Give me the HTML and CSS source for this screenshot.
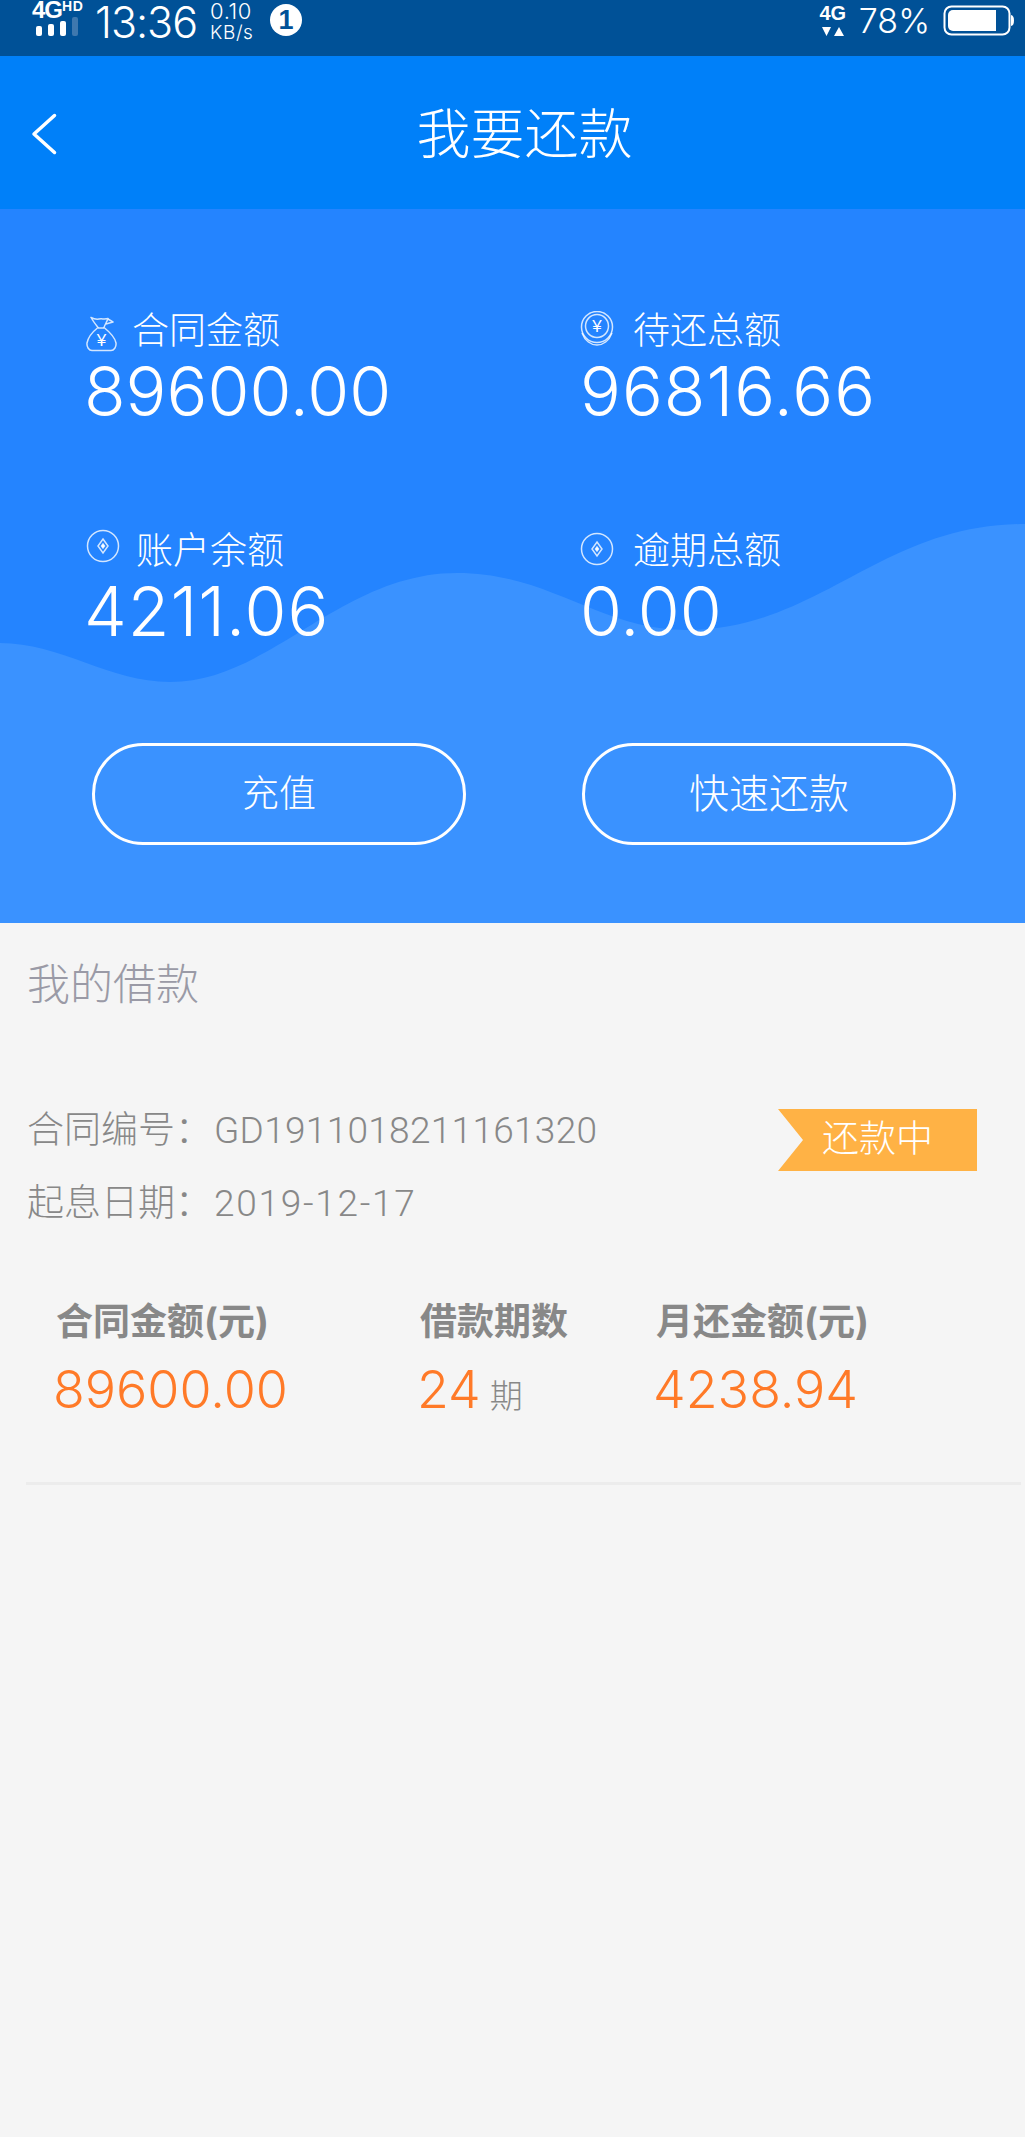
FILE: index.html
```html
<!DOCTYPE html>
<html lang="zh-CN">
<head>
    <meta charset="UTF-8">
    <meta name="viewport" content="width=device-width, initial-scale=1.0">
    <title>我要还款</title>
    <link rel="stylesheet" href="styles.css">
</head>
<body>
    <div class="status-bar">
        <div class="signal">
            <div class="signal-type"><span class="net">4G</span><span class="hd">HD</span></div>
            <div class="bars"><i></i><i></i><i></i><i class="off"></i></div>
        </div>
        <span class="clock">13:36</span>
        <div class="speed"><span>0.10</span><span class="unit">KB/s</span></div>
        <span class="notice">1</span>
        <div class="status-right">
            <div class="data">
                <span>4G</span>
                <svg width="22" height="10" viewBox="0 0 22 10"><path d="M0 1h9L4.500 10zM12 10h10L17 1z" fill="#fff"/></svg>
            </div>
            <span class="percent">78%</span>
            <svg class="battery" width="71" height="32" viewBox="0 0 71 32">
                <rect x="1.500" y="1.500" width="65" height="28" rx="7" fill="none" stroke="#fff" stroke-width="2"/>
                <path d="M5 10a5 5 0 0 1 5-5h43v21H10a5 5 0 0 1-5-5z" fill="#fff"/>
                <path d="M68 10c2 .5 3 2 3 5.500s-1 5-3 5.500z" fill="#fff"/>
            </svg>
        </div>
    </div>

    <div class="nav">
        <svg class="back" width="26" height="42" viewBox="0 0 26 42"><path d="M23.500 2.500L3 21l20.500 18.500" fill="none" stroke="#fff" stroke-width="3.500" stroke-linecap="round" stroke-linejoin="round"/></svg>
        <h1>我要还款</h1>
    </div>

    <div class="hero">
        <svg class="wave" width="1025" height="714" viewBox="0 0 1025 714"><path d="M0 434C60 434 110 473 170 473C270 473 340 364 457 364C550 364 600 421 686 421C820 421 880 315 1025 315V714H0Z" fill="#3a92ff"/></svg>
        <div class="stats">
            <div class="stat">
                <div class="stat-head">
                    <svg class="icon bag" width="31" height="36" viewBox="0 0 31 36" fill="none" stroke="#fff" stroke-opacity=".8" stroke-width="1.500" stroke-linejoin="round">
                        <path d="M5 1.500c3 1.500 5 2 8 1.500 3-.5 6 .5 9-.5-1 3-3 6-4 9 5 4 11 10 12 15.500.5 4-2 7.500-5 7.500H6c-3 0-5.500-3.500-5-7.500 1-5.500 6-11.500 11-15.500C10 9 7 5 5 1.500z"/>
                        <path d="M12 12h6M22 3l5 3-7 2"/>
                        <text x="15.500" y="30" text-anchor="middle" font-size="17" fill="#fff" stroke="none" font-family="Liberation Sans">¥</text>
                    </svg>
                    <span>合同金额</span>
                </div>
                <div class="stat-num">89600.00</div>
            </div>
            <div class="stat">
                <div class="stat-head">
                    <svg class="icon coin" width="34" height="35" viewBox="0 0 34 35" fill="none" stroke="#fff" stroke-opacity=".8">
                        <circle cx="17" cy="16" r="15.500" stroke-width="1.500"/>
                        <circle cx="17" cy="15" r="11.500" stroke-width="1.500"/>
                        <path d="M2 22c3 8 9 12 15 12s12-4 15-12" stroke-width="1.500"/>
                        <text x="17" y="21" text-anchor="middle" font-size="17" fill="#fff" stroke="none" font-family="Liberation Sans">¥</text>
                    </svg>
                    <span>待还总额</span>
                </div>
                <div class="stat-num ones">96816.66</div>
            </div>
            <div class="stat">
                <div class="stat-head">
                    <svg class="icon ring" width="34" height="34" viewBox="0 0 34 34" fill="none" stroke="#fff" stroke-opacity=".8" stroke-width="1.500">
                        <circle cx="17" cy="17" r="15.500"/>
                        <path d="M17 10l5 7-5 7-5-7z"/>
                        <path d="M17 15l1.500 2-1.500 2-1.500-2z" fill="#fff"/>
                    </svg>
                    <span>账户余额</span>
                </div>
                <div class="stat-num ones">4211.06</div>
            </div>
            <div class="stat">
                <div class="stat-head">
                    <svg class="icon ring low" width="34" height="34" viewBox="0 0 34 34" fill="none" stroke="#fff" stroke-opacity=".8" stroke-width="1.500">
                        <circle cx="17" cy="17" r="15.500"/>
                        <path d="M17 10l5 7-5 7-5-7z"/>
                        <path d="M17 15l1.500 2-1.500 2-1.500-2z" fill="#fff"/>
                    </svg>
                    <span>逾期总额</span>
                </div>
                <div class="stat-num">0.00</div>
            </div>
        </div>
        <div class="actions">
            <button>充值</button>
            <button>快速还款</button>
        </div>
    </div>

    <div class="loans">
        <h2>我的借款</h2>
        <div class="loan">
            <div class="loan-top">
                <div class="loan-info">
                    <p>合同编号：<span>GD1911018211161320</span></p>
                    <p>起息日期：<span class="date">2019-12-17</span></p>
                </div>
                <div class="tag">还款中</div>
            </div>
            <div class="loan-grid">
                <div class="cell">
                    <div class="cell-label">合同金额(元)</div>
                    <div class="cell-num">89600.00</div>
                </div>
                <div class="cell">
                    <div class="cell-label">借款期数</div>
                    <div class="cell-num">24<small>期</small></div>
                </div>
                <div class="cell">
                    <div class="cell-label">月还金额(元)</div>
                    <div class="cell-num">4238.94</div>
                </div>
            </div>
        </div>
    </div>
</body>
</html>
```

FILE: styles.css
```css
* {
    box-sizing: border-box;
}
body {
    margin: 0;
    height: 2137px;
    overflow: hidden;
    background: #f5f5f5;
    font-family: Inter, "Noto Sans CJK SC", sans-serif;
    color: #888;
}

/* status bar */
.status-bar {
    display: flex;
    align-items: flex-start;
    height: 56px;
    padding-left: 32px;
    background: #005197;
    color: #fff;
}
.signal {
    width: 63px;
    font-family: "Liberation Sans", sans-serif;
    font-weight: 700;
}
.signal-type {
    display: flex;
    align-items: flex-start;
    height: 17px;
}
.net {
    font-size: 24px;
    line-height: 20px;
    letter-spacing: -1px;
}
.hd {
    font-size: 14px;
    line-height: 12px;
    letter-spacing: .5px;
}
.bars {
    display: flex;
    gap: 6px;
    padding: 0 0 0 4px;
    align-items: flex-end;
    height: 19px;
}
.bars i {
    width: 6px;
    height: 10px;
    border-radius: 2px;
    background: #fff;
}
.bars i:nth-child(2) {
    height: 12px;
}
.bars i:nth-child(3) {
    height: 15px;
}
.bars i.off {
    height: 19px;
    background: #3f78ae;
}
.clock {
    font-size: 43px;
    font-weight: 300;
    line-height: 44px;
    letter-spacing: -1px;
}
.speed {
    display: flex;
    flex-direction: column;
    width: 44px;
    margin-left: 13px;
    font-size: 22px;
    font-weight: 300;
    line-height: 23px;
    letter-spacing: .6px;
}
.speed .unit {
    font-size: 19px;
    line-height: 20px;
    white-space: nowrap;
}
.notice {
    width: 32px;
    height: 32px;
    margin: 4px 0 0 16px;
    border-radius: 50%;
    background: #fff;
    color: #005197;
    font-family: "Liberation Sans", sans-serif;
    font-size: 27px;
    font-weight: 700;
    line-height: 32px;
    text-align: center;
}
.status-right {
    display: flex;
    align-items: flex-start;
    margin-left: auto;
    padding-right: 11px;
}
.data {
    display: flex;
    flex-direction: column;
    align-items: center;
    width: 28px;
    padding-top: 3px;
    font-family: "Liberation Sans", sans-serif;
    font-size: 20px;
    font-weight: 700;
    line-height: 20px;
}
.data svg {
    margin-top: 3px;
}
.percent {
    margin-left: 12px;
    font-size: 34px;
    font-weight: 300;
    line-height: 42px;
}
.battery {
    margin: 5px 0 0 13px;
}

/* nav */
.nav {
    position: relative;
    height: 153px;
    padding-left: 24px;
    background: #0080f9;
    color: #fff;
    text-align: center;
}
.back {
    position: absolute;
    left: 31px;
    top: 57px;
}
.nav h1 {
    margin: 0;
    font-size: 54px;
    font-weight: 300;
    line-height: 158px;
}

/* blue summary block */
.hero {
    position: relative;
    height: 714px;
    padding-top: 100px;
    background: #2484ff;
    color: #fff;
    overflow: hidden;
}
.wave {
    position: absolute;
    left: 0;
    top: 0;
}
.stats {
    position: relative;
    display: grid;
    grid-template-columns: 494px 1fr;
    grid-auto-rows: 120px;
    row-gap: 100px;
    padding-left: 86px;
}
.stat-head {
    display: flex;
    align-items: center;
    gap: 15px;
    height: 44px;
    font-size: 37px;
    font-weight: 300;
    line-height: 44px;
}
.icon {
    flex: none;
}
.bag {
    margin-top: 6px;
}
.coin {
    margin-top: -6px;
    margin-right: 4px;
}
.ring {
    margin-top: -10px;
    margin-right: 1px;
}
.ring.low {
    margin-top: -4px;
    margin-right: 4px;
}
.stat-num {
    font-size: 68px;
    font-weight: 300;
    line-height: 76px;
}
.stat:nth-child(odd) .stat-num {
    margin-left: -2px;
}
/* the 1 is narrower here than in the original */
.stat-num.ones {
    letter-spacing: 1px;
}
.actions {
    position: relative;
    display: flex;
    gap: 116px;
    padding-left: 92px;
    margin-top: 94px;
}
.actions button {
    width: 374px;
    height: 102px;
    padding: 0 0 6px;
    border: 3px solid #fff;
    border-radius: 51px;
    background: transparent;
    color: #fff;
    font-family: inherit;
    font-size: 40px;
    font-weight: 300;
}
.actions button:first-child {
    font-size: 37px;
}

/* loan list */
.loans {
    padding-left: 26px;
    padding-right: 4px;
}
.loans h2 {
    margin: 0;
    padding: 32px 0 0 1px;
    font-size: 43px;
    font-weight: 300;
    line-height: 58px;
    color: #9a9aa6;
}
.loan {
    padding-top: 95px;
    border-bottom: 3px solid #ececec;
}
.loan-top {
    display: flex;
    justify-content: space-between;
    align-items: flex-start;
    padding-right: 44px;
}
.loan-info {
    padding-left: 1px;
}
.loan-info p {
    margin: 0 0 28px;
    font-size: 37px;
    font-weight: 300;
    line-height: 44px;
    white-space: nowrap;
}
.loan-info span {
    margin-left: 2px;
    font-family: Roboto, sans-serif;
    letter-spacing: .3px;
}
.loan-info .date {
    letter-spacing: 1.7px;
}
.tag {
    width: 199px;
    height: 62px;
    margin-top: 1px;
    padding-left: 44px;
    background: #ffb245;
    clip-path: polygon(0 0, 100% 0, 100% 100%, 0 100%, 25px 50%);
    color: #fff;
    font-size: 37px;
    font-weight: 300;
    line-height: 60px;
}
.loan-grid {
    display: grid;
    grid-template-columns: 364px 236px 1fr;
    padding: 46px 0 54px 30px;
}
.cell-label {
    font-size: 37px;
    font-weight: 700;
    line-height: 44px;
}
.cell-num {
    margin: 14px 0 0 -3px;
    font-size: 52px;
    font-weight: 300;
    line-height: 64px;
    color: #ff7a28;
}
.cell-num small {
    margin-left: 9px;
    font-size: 33px;
    color: #888;
}
```
